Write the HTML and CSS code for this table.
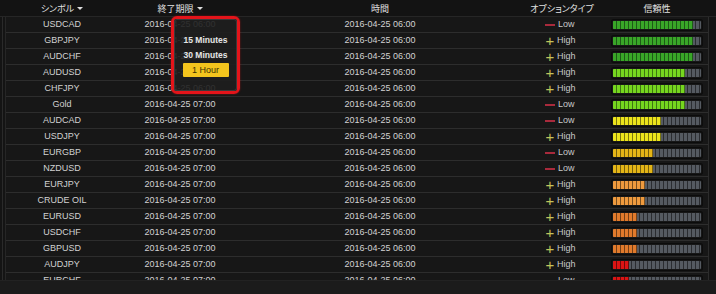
FILE: index.html
```html
<!DOCTYPE html>
<html lang="ja">
<head>
<meta charset="utf-8">
<link rel="stylesheet" href="styles.css">
</head>
<body>
<div class="page">
  <div class="head">
    <div class="hc">シンボル <span class="caret"></span></div>
    <div class="hc">終了期限 <span class="caret"></span></div>
    <div class="hc">時間</div>
    <div class="hc">オプションタイプ</div>
    <div class="hc">信頼性</div>
  </div>
  <div class="body">
    <div class="rows">
      <div class="row"><div>USDCAD</div><div>2016-04-25 06:00</div><div>2016-04-25 06:00</div><div class="opt"><span class="low"></span>Low</div><div class="cell-bar"><div class="bar"><div class="fill g1" style="width:80px"></div></div></div></div>
      <div class="row"><div>GBPJPY</div><div>2016-04-25 06:00</div><div>2016-04-25 06:00</div><div class="opt"><span class="high">+</span>High</div><div class="cell-bar"><div class="bar"><div class="fill g1" style="width:80px"></div></div></div></div>
      <div class="row"><div>AUDCHF</div><div>2016-04-25 06:00</div><div>2016-04-25 06:00</div><div class="opt"><span class="high">+</span>High</div><div class="cell-bar"><div class="bar"><div class="fill g1" style="width:80px"></div></div></div></div>
      <div class="row"><div>AUDUSD</div><div>2016-04-25 06:00</div><div>2016-04-25 06:00</div><div class="opt"><span class="high">+</span>High</div><div class="cell-bar"><div class="bar"><div class="fill g2" style="width:72px"></div></div></div></div>
      <div class="row"><div>CHFJPY</div><div>2016-04-25 06:00</div><div>2016-04-25 06:00</div><div class="opt"><span class="high">+</span>High</div><div class="cell-bar"><div class="bar"><div class="fill g2" style="width:72px"></div></div></div></div>
      <div class="row"><div>Gold</div><div>2016-04-25 07:00</div><div>2016-04-25 06:00</div><div class="opt"><span class="low"></span>Low</div><div class="cell-bar"><div class="bar"><div class="fill g2" style="width:72px"></div></div></div></div>
      <div class="row"><div>AUDCAD</div><div>2016-04-25 07:00</div><div>2016-04-25 06:00</div><div class="opt"><span class="low"></span>Low</div><div class="cell-bar"><div class="bar"><div class="fill y1" style="width:48px"></div></div></div></div>
      <div class="row"><div>USDJPY</div><div>2016-04-25 07:00</div><div>2016-04-25 06:00</div><div class="opt"><span class="high">+</span>High</div><div class="cell-bar"><div class="bar"><div class="fill y1" style="width:48px"></div></div></div></div>
      <div class="row"><div>EURGBP</div><div>2016-04-25 07:00</div><div>2016-04-25 06:00</div><div class="opt"><span class="low"></span>Low</div><div class="cell-bar"><div class="bar"><div class="fill y2" style="width:40px"></div></div></div></div>
      <div class="row"><div>NZDUSD</div><div>2016-04-25 07:00</div><div>2016-04-25 06:00</div><div class="opt"><span class="low"></span>Low</div><div class="cell-bar"><div class="bar"><div class="fill y2" style="width:40px"></div></div></div></div>
      <div class="row"><div>EURJPY</div><div>2016-04-25 07:00</div><div>2016-04-25 06:00</div><div class="opt"><span class="high">+</span>High</div><div class="cell-bar"><div class="bar"><div class="fill o1" style="width:32px"></div></div></div></div>
      <div class="row"><div>CRUDE OIL</div><div>2016-04-25 07:00</div><div>2016-04-25 06:00</div><div class="opt"><span class="high">+</span>High</div><div class="cell-bar"><div class="bar"><div class="fill o1" style="width:32px"></div></div></div></div>
      <div class="row"><div>EURUSD</div><div>2016-04-25 07:00</div><div>2016-04-25 06:00</div><div class="opt"><span class="high">+</span>High</div><div class="cell-bar"><div class="bar"><div class="fill o2" style="width:24px"></div></div></div></div>
      <div class="row"><div>USDCHF</div><div>2016-04-25 07:00</div><div>2016-04-25 06:00</div><div class="opt"><span class="high">+</span>High</div><div class="cell-bar"><div class="bar"><div class="fill o2" style="width:24px"></div></div></div></div>
      <div class="row"><div>GBPUSD</div><div>2016-04-25 07:00</div><div>2016-04-25 06:00</div><div class="opt"><span class="high">+</span>High</div><div class="cell-bar"><div class="bar"><div class="fill o2" style="width:24px"></div></div></div></div>
      <div class="row"><div>AUDJPY</div><div>2016-04-25 07:00</div><div>2016-04-25 06:00</div><div class="opt"><span class="high">+</span>High</div><div class="cell-bar"><div class="bar"><div class="fill r" style="width:16px"></div></div></div></div>
      <div class="row"><div>EURCHF</div><div>2016-04-25 07:00</div><div>2016-04-25 06:00</div><div class="opt"><span class="low"></span>Low</div><div class="cell-bar"><div class="bar"><div class="fill r" style="width:16px"></div></div></div></div>
    </div>
  </div>
  <div class="foot"></div>

  <div class="menu">
    <div class="menu-in">
      <div class="item">15 Minutes</div>
      <div class="item">30 Minutes</div>
      <div class="item active">1 Hour</div>
    </div>
  </div>
</div>
</body>
</html>
```

FILE: styles.css
```css
* { box-sizing: border-box; margin: 0; padding: 0; }
html, body { background: #141414; }
body {
  width: 716px;
  height: 294px;
  overflow: hidden;
  font-family: "Liberation Sans", "Noto Sans CJK JP", sans-serif;
  font-size: 9px;
  color: #d2d2d2;
}
.page {
  position: relative;
  width: 716px;
  height: 294px;
  background: #141414;
}
.head {
  display: grid;
  grid-template-columns: 112px 124px 276px 88px 102px;
  height: 17px;
  padding-left: 6px;
  background: #131313;
  border-bottom: 1px solid #262626;
}
.hc {
  display: flex;
  align-items: center;
  justify-content: center;
  gap: 3px;
  font-family: "Noto Sans CJK JP", sans-serif;
  font-feature-settings: "palt";
  font-size: 9px;
  color: #e2e2e2;
  line-height: 1;
}
.caret {
  width: 0;
  height: 0;
  border-left: 3px solid transparent;
  border-right: 3px solid transparent;
  border-top: 3px solid #dedede;
  margin-top: 1px;
}
.body {
  height: 263px;
  overflow: hidden;
  margin-left: 2px;
  padding-left: 2px;
  border-left: 1px solid #2a2a2a;
}
.rows {
  width: 704px;
  height: 263px;
  border-left: 1px solid #262626;
  border-right: 1px solid #2c2c2c;
}
.row {
  display: grid;
  grid-template-columns: 112px 124px 276px 88px 102px;
  height: 16px;
  background: #171717;
  border-bottom: 1px solid #2d2d2d;
}
.row > div {
  display: flex;
  align-items: center;
  justify-content: center;
  line-height: 1;
  white-space: nowrap;
}
.row > .opt {
  justify-content: flex-start;
  padding-left: 27px;
  color: #c9c9c9;
}
.low {
  display: inline-block;
  width: 10px;
  height: 2px;
  background: #a82a3c;
  margin-right: 3px;
}
.high {
  display: inline-block;
  width: 10px;
  margin-right: 2px;
  color: #c3c45a;
  font-size: 15px;
  line-height: 9px;
  text-align: center;
}
.bar {
  width: 90px;
  height: 10px;
  padding: 1px;
  border-radius: 2px;
  background:
    repeating-linear-gradient(to right, #555a61 0 3px, #2a2c30 3px 4px);
  background-clip: content-box;
  box-shadow: 0 0 0 1px #0c0c0c;
  display: flex;
}
.fill {
  height: 100%;
  border-radius: 1px 0 0 1px;
}
.g1 { background: repeating-linear-gradient(to right, #39a628 0 3px, #1d5a16 3px 4px); }
.g2 { background: repeating-linear-gradient(to right, #76d61f 0 3px, #3e7512 3px 4px); }
.y1 { background: repeating-linear-gradient(to right, #ece41c 0 3px, #7c770e 3px 4px); }
.y2 { background: repeating-linear-gradient(to right, #e4b517 0 3px, #77600c 3px 4px); }
.o1 { background: repeating-linear-gradient(to right, #ee9a3e 0 3px, #7a4f1f 3px 4px); }
.o2 { background: repeating-linear-gradient(to right, #e07a2c 0 3px, #743f16 3px 4px); }
.r  { background: repeating-linear-gradient(to right, #dc1414 0 3px, #700a0a 3px 4px); }
.foot {
  height: 14px;
  background: #1b1b1b;
  border-top: 1px solid #222;
}
.menu {
  position: absolute;
  left: 171px;
  top: 16px;
  width: 69px;
  height: 78px;
  border: 3px solid #e3141a;
  border-radius: 6px;
  box-shadow: 0 0 2px rgba(255, 30, 30, 0.5);
}
.menu-in {
  height: 100%;
  border-radius: 3px;
  background: rgba(30, 30, 30, 0.9);
  box-shadow: inset 0 0 0 1px #3a3a3a;
  padding-top: 14px;
  display: flex;
  flex-direction: column;
  align-items: center;
}
.item {
  height: 15px;
  line-height: 15px;
  font-weight: bold;
  color: #e6e6e6;
  font-size: 8.5px;
}
.item.active {
  width: 46px;
  height: 14px;
  line-height: 14px;
  text-align: center;
  background: #f3c41d;
  color: #3a3000;
  font-weight: normal;
  font-size: 9px;
  border-radius: 1px;
}
```
